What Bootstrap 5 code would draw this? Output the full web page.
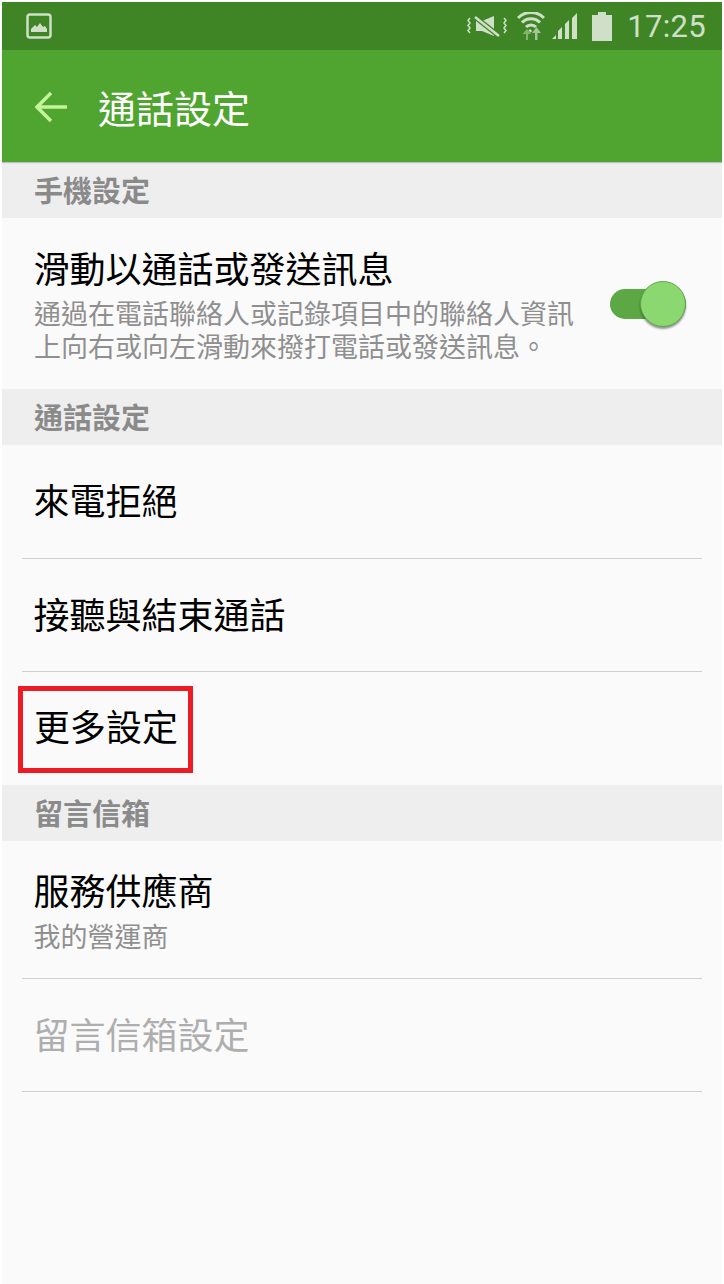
<!DOCTYPE html>
<html lang="zh-Hant">
<head>
<meta charset="utf-8">
<title>通話設定</title>
<link href="https://cdn.jsdelivr.net/npm/bootstrap@5.3.0/dist/css/bootstrap.min.css" rel="stylesheet">
<style>
html,body{height:100%;background:#fff;overflow:hidden}
body{font-family:"Noto Sans CJK TC","Liberation Sans",sans-serif;padding:2px 2px 0 2px}
.screen{background:#fafafa;height:1282px}
.stat-bar{height:48px;background:#3f8526;color:#d0e0c8;padding:0 16px 0 24px}
.clock{font-family:Roboto,sans-serif;font-size:31px;line-height:1;letter-spacing:.3px;margin-left:15px}
.ic-vib{margin-left:1px}
.ic-wifi{margin-left:10px}
.ic-sig{margin-left:7px}
.ic-bat{margin-left:14px}
.app-bar{height:112px;background:#4fa52f;padding-left:33px;gap:31px;color:#fff;font-size:38px;box-shadow:0 1px 1px rgba(0,0,0,.2);position:relative}
.back-ic{margin-top:2px}
.sect{background:#eee;height:56px;padding-left:32px;padding-bottom:2px;color:#8a8a8a;font-size:29px;font-weight:700;line-height:40px}
.rowi{padding:0 20px}
.rowi-in{padding-left:11.5px;padding-bottom:5px;color:#000;font-size:36px;line-height:44px;height:100%}
.line{border-bottom:1px solid #cfcfcf}
.h113{height:113px}
.h114{height:114px}
.h138{height:138px}
.h171{height:171px;padding:0 32px}
.ttl{color:#000;font-size:36px;line-height:44px;margin-left:-.5px;margin-bottom:-2px}
.sub{font-size:27px;line-height:33px;color:#8f8f8f;margin-top:9px}
.sub-one{font-size:27px;line-height:33px;color:#8f8f8f;margin-top:8px}
.off{color:#aeaeae}
.sw{width:76px;height:30px;border-radius:15px;background:#5ba845;position:relative;flex:none;margin-right:4px}
.knob{position:absolute;right:0;top:-8px;width:46px;height:46px;border-radius:50%;background:#8ad86f;border:1px solid #5ea548;box-shadow:0 2px 2px rgba(0,0,0,.4)}
.redbox{display:inline-block;border:5px solid #ed1c24;padding:0 10px 0 11px;height:87px;margin-left:-15.5px;margin-top:1px;line-height:69px}
.flat{padding-bottom:0}
</style>
</head>
<body>
<div class="screen d-flex flex-column">
  <div class="stat-bar d-flex align-items-center justify-content-between">
    <svg width="26" height="26" viewBox="0 0 26 26"><rect x="1.500" y="1.500" width="23" height="23" rx="2.500" fill="none" stroke="#d0e0c8" stroke-width="2.500"/><path d="M5 19v-3l4-4 2 2 3-4 3 4 2-1 2 3v3z" fill="#d0e0c8"/></svg>
    <div class="d-flex align-items-center">
      <svg class="ic-vib" width="40" height="22" viewBox="0 0 40 22" fill="none"><path d="M3 3l-2 2.500 2 2.500-2 2.500 2 2.500-2 2.500 2 2.500M37 3l2 2.500-2 2.500 2 2.500-2 2.500 2 2.500-2 2.500" stroke="#d0e0c8" stroke-width="1.500"/><path d="M9 6h6l12-5v20l-12-5H9z" fill="#d0e0c8"/><path d="M8 2l24 19" stroke="#3f8526" stroke-width="5"/><path d="M8 2l24 19" stroke="#d0e0c8" stroke-width="2.500"/></svg>
      <svg class="ic-wifi" width="28" height="28" viewBox="0 0 28 28" fill="none"><path d="M1 6a18 18 0 0 1 26 0M5 10.500a12.500 12.500 0 0 1 18 0M9 15a7 7 0 0 1 10 0" stroke="#d0e0c8" stroke-width="3"/><path d="M14 18l-1.500 1.500" stroke="#d0e0c8" stroke-width="3"/><path d="M9 28v-6H5.500l4.500-5 4 5h-3v6z" fill="#85b36f"/><path d="M18 28v-7h-3l4.500-6 4.500 6h-3.500v7z" fill="#a4c594"/></svg>
      <svg class="ic-sig" width="26" height="26" viewBox="0 0 26 26" fill="#d0e0c8"><path d="M0 26l4-4v4zM6 26v-8l4-4v12zM13 26V11l4-4v19zM20 26V5l5-5v26z"/></svg>
      <svg class="ic-bat" width="20" height="29" viewBox="0 0 20 29"><path d="M6 0h8v3h6v26H0V3h6z" fill="#d0e0c8"/></svg>
      <span class="clock">17:25</span>
    </div>
  </div>
  <div class="app-bar d-flex align-items-center">
    <svg class="back-ic" width="32" height="32" viewBox="0 0 32 32" fill="none" stroke="#c5f59a" stroke-width="3.500"><path d="M1 16h31M16 2L2 16l14 14"/></svg>
    <span>通話設定</span>
  </div>
  <div class="sect d-flex align-items-center">手機設定</div>
  <div class="h171 d-flex align-items-center justify-content-between">
    <div>
      <div class="ttl">滑動以通話或發送訊息</div>
      <div class="sub">通過在電話聯絡人或記錄項目中的聯絡人資訊<br>上向右或向左滑動來撥打電話或發送訊息。</div>
    </div>
    <div class="sw"><div class="knob"></div></div>
  </div>
  <div class="sect d-flex align-items-center">通話設定</div>
  <div class="rowi h114"><div class="rowi-in line d-flex align-items-center">來電拒絕</div></div>
  <div class="rowi h113"><div class="rowi-in line d-flex align-items-center">接聽與結束通話</div></div>
  <div class="rowi h113"><div class="rowi-in flat d-flex align-items-center"><span class="redbox">更多設定</span></div></div>
  <div class="sect d-flex align-items-center">留言信箱</div>
  <div class="rowi h138"><div class="rowi-in flat line d-flex flex-column justify-content-center"><div>服務供應商</div><div class="sub-one">我的營運商</div></div></div>
  <div class="rowi h113"><div class="rowi-in line off d-flex align-items-center">留言信箱設定</div></div>
</div>
<script src="https://cdn.jsdelivr.net/npm/bootstrap@5.3.0/dist/js/bootstrap.bundle.min.js"></script>
</body>
</html>
